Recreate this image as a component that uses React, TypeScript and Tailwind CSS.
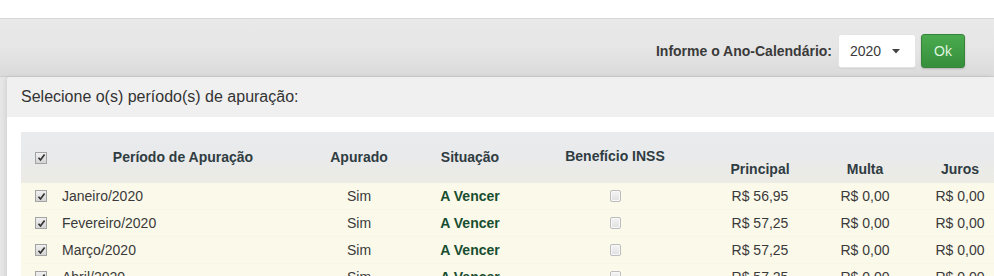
import React from 'react';

const rows = [
  { mes: 'Janeiro/2020', principal: 'R$ 56,95' },
  { mes: 'Fevereiro/2020', principal: 'R$ 57,25' },
  { mes: 'Março/2020', principal: 'R$ 57,25' },
  { mes: 'Abril/2020', principal: 'R$ 57,25' },
];

const cols = 'grid grid-cols-[35px_254px_98px_124px_166px_124px_86px_104px]';

function Check({ checked }: { checked: boolean }) {
  if (!checked) {
    return (
      <span className="inline-block w-[11px] h-[12px] rounded-[2px] border border-[#bdbdbd] bg-gradient-to-b from-[#f4f4f4] to-[#e0e0e0] shadow-[inset_0_0_0_1px_#f8f8f8]" />
    );
  }
  return (
    <span className="inline-flex items-center justify-center w-[12px] h-[12px] border border-[#a3a3a3] bg-gradient-to-b from-[#f0f0f0] to-[#d4d4d4]">
      <svg width="9" height="9" viewBox="0 0 9 9">
        <path d="M1.5 4.8 L3.5 7 L7.6 1.6" fill="none" stroke="#333" strokeWidth="1.7" />
      </svg>
    </span>
  );
}

export default function App() {
  return (
    <div className="w-[994px] h-[276px] overflow-hidden bg-[#e6e6e6] font-['Liberation_Sans',Arial,sans-serif] text-[#333]">
      {/* topo */}
      <div className="h-[19px] bg-white border-b border-[#d6d6d6]" />

      {/* barra do ano */}
      <div className="h-[58px] pt-[15px] pr-[29px] flex items-start justify-end gap-[5px] bg-gradient-to-b from-[#e9e9e9] via-[#e6e6e6] to-[#dadada] border-b border-[#cdcdcd]">
        <span className="text-[14px] font-bold text-[#3a3a3a] leading-[34px] mr-[1px]">Informe o Ano-Calendário:</span>
        <div className="w-[78px] h-[34px] bg-white rounded-[3px] border border-[#e4e4e4] shadow-[0_1px_1px_rgba(0,0,0,0.05)] flex items-center pl-[11px] pr-[15px] justify-between">
          <span className="text-[14px] text-[#3a3a3a]">2020</span>
          <svg width="8" height="5" viewBox="0 0 8 5">
            <path d="M0 0 L8 0 L4 4.5 Z" fill="#444" />
          </svg>
        </div>
        <button className="w-[44px] h-[34px] rounded-[3px] border border-[#37833b] bg-gradient-to-b from-[#4aaa4f] to-[#368f3b] text-[14px] text-[#dff5df] shadow-[0_1px_2px_rgba(0,0,0,0.2)]">
          Ok
        </button>
      </div>

      {/* painel */}
      <div className="pl-[7px]">
        <div className="bg-white rounded-tl-[4px] shadow-[-2px_0_4px_rgba(0,0,0,0.08)]">
          <div className="h-[40px] bg-[#f0f0f0] px-[14px] flex items-center rounded-tl-[4px]">
            <span className="text-[16px] text-[#333]">Selecione o(s) período(s) de apuração:</span>
          </div>

          <div className="pt-[15px] pl-[14px]">
            <div className="w-[1000px]">
              {/* cabeçalho */}
              <div className={`${cols} h-[51px] bg-gradient-to-b from-[#eaebec] via-[#e9eaeb] to-[#ecebe4] text-[14px] font-bold text-[#2f3c42]`}>
                <div className="flex items-center justify-end pr-[9px]">
                  <Check checked />
                </div>
                <div className="flex items-center justify-center">Período de Apuração</div>
                <div className="flex items-center justify-center">Apurado</div>
                <div className="flex items-center justify-center">Situação</div>
                <div className="flex items-center justify-center pb-[2px]">Benefício INSS</div>
                <div className="flex items-end justify-center pb-[3px]">Principal</div>
                <div className="flex items-end justify-center pb-[3px]">Multa</div>
                <div className="flex items-end justify-center pb-[3px]">Juros</div>
              </div>

              {/* linhas */}
              {rows.map((r) => (
                <div
                  key={r.mes}
                  className={`${cols} h-[27px] bg-[#fbf9ea] border-b border-[#f8f6e4] text-[14px] text-[#3a3a3a] items-center`}
                >
                  <div className="flex items-center justify-end pr-[9px]">
                    <Check checked />
                  </div>
                  <div className="pl-[6px]">{r.mes}</div>
                  <div className="text-center">Sim</div>
                  <div className="text-center font-bold text-[#174e30]">A Vencer</div>
                  <div className="flex items-center justify-center">
                    <Check checked={false} />
                  </div>
                  <div className="text-center">{r.principal}</div>
                  <div className="text-center">R$ 0,00</div>
                  <div className="text-center">R$ 0,00</div>
                </div>
              ))}
            </div>
          </div>
        </div>
      </div>
    </div>
  );
}
